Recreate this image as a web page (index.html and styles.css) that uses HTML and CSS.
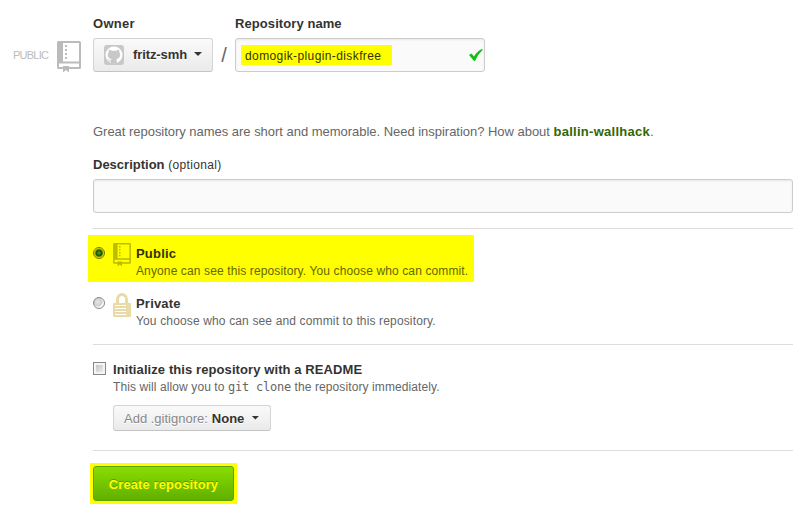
FILE: index.html
```html
<!DOCTYPE html>
<html lang="en">
<head>
<meta charset="utf-8">
<title>Create a new repository</title>
<link rel="stylesheet" href="styles.css">
</head>
<body>
<svg class="defs" aria-hidden="true">
  <symbol id="repo" viewBox="0 0 24 31">
    <path fill-rule="evenodd" d="M1.500 0h21Q24 0 24 1.500V26.500Q24 28 22.500 28H12v3.500l-3-2.500-3 2.500V28H1.500Q0 28 0 26.500v-25Q0 0 1.500 0zM6 2V20.500h16V2zM2 22.500v3.500h4v-1h6v1h10v-3.500z"/>
    <path d="M8 4h2v2H8zm0 4h2v2H8zm0 4h2v2H8zm0 4h2v2H8z"/>
  </symbol>
</svg>
<form class="page">
  <aside class="visibility"><span class="visibility-text">PUBLIC</span><svg class="repo-large"><use href="#repo"/></svg></aside>
  <main class="content">
    <div class="name-row">
      <div class="field owner">
        <div class="label"><span class="owner-label">Owner</span></div>
        <button type="button" class="select owner-select">
          <svg class="avatar" viewBox="0 0 20 20"><rect width="20" height="20" rx="3" fill="#c8c8c8"/><circle cx="10" cy="10" r="8.500" fill="#fff"/><path fill="#c8c8c8" d="M5 4.500l3 1.200h4l3-1.200.4 2.700c1.600 2.500.8 6-2.900 6.800l.5 4.800H7v-2.300c-2 .2-2.500-2-3.500-2.500 1.800-.3 2 1.600 3.600 1.300l.4-1.300c-3.700-.8-4.500-4.300-2.900-6.800z"/></svg>
          <strong class="owner-name">fritz-smh</strong><i class="caret"></i>
        </button>
      </div>
      <span class="slash">/</span>
      <div class="field repo">
        <div class="label"><span class="repo-label">Repository name</span></div>
        <div class="input repo-input"><span class="marked">domogik-plugin-diskfree</span><svg class="check" viewBox="0 0 14 12"><path fill="#14be14" d="M0 6l2.500-1.500L5 7.500Q8 2 13 0l.8.800Q9 5 6 12H5z"/></svg></div>
      </div>
    </div>
    <p class="hint"><span class="hint-copy">Great repository names are short and memorable. Need inspiration? How about </span><strong>ballin-wallhack</strong>.</p>
    <div class="label description-label"><span class="desc-word">Description</span> <span class="optional">(optional)</span></div>
    <div class="input"></div>
    <hr>
    <div class="option public">
      <span class="radio checked"></span>
      <svg class="repo-small"><use href="#repo"/></svg>
      <div class="copy"><strong class="public-title">Public</strong><span class="note public-note">Anyone can see this repository. You choose who can commit.</span></div>
    </div>
    <div class="option private">
      <span class="radio"></span>
      <svg class="lock" viewBox="0 0 18 24"><path fill="none" stroke="#e9dba5" stroke-width="3" d="M4.500 12V6.500a4.500 5 0 0 1 9 0V12"/><path fill="#e9dba5" fill-rule="evenodd" d="M1 10h16q1 0 1 1v12q0 1-1 1H1q-1 0-1-1V11q0-1 1-1zm1 2v1h11v-1zm0 3v1h11v-1zm0 3v1h11v-1zm0 3v1h11v-1z"/></svg>
      <div class="copy"><strong class="private-title">Private</strong><span class="note private-note">You choose who can see and commit to this repository.</span></div>
    </div>
    <hr>
    <div class="readme">
      <span class="checkbox"></span>
      <div class="copy">
        <strong class="readme-title">Initialize this repository with a README</strong>
        <span class="note readme-note">This will allow you to <code>git clone</code> the repository immediately.</span>
        <button type="button" class="select ignore-select"><span class="ignore-label">Add .gitignore:</span><strong class="ignore-value">None</strong><i class="caret"></i></button>
      </div>
    </div>
    <hr>
    <div class="submit-mark"><button type="button" class="submit"><span class="submit-text">Create repository</span></button></div>
  </main>
</form>
</body>
</html>
```
FILE: styles.css
```css
* { box-sizing: border-box; }
body { margin: 0; background: #fff; color: #333; font: 13px/18px "Liberation Sans", Arial, sans-serif; }
.defs { display: none; }
svg { display: block; flex: none; }
button { font: inherit; color: inherit; margin: 0; }
.page { display: flex; padding: 14px 14px 0 13px; white-space: nowrap; }
.visibility { display: flex; width: 80px; height: 31px; margin-top: 27px; flex: none; }
.visibility-text { width: 44px; font-size: 11px; line-height: 29px; color: #bbb; letter-spacing: -.75px; }
.repo-large { width: 24px; height: 31px; fill: #bbb; }
.content { width: 700px; flex: none; }
.name-row { display: flex; align-items: flex-end; height: 58px; }
.owner { width: 120px; }
.label { font-weight: bold; height: 18px; margin-bottom: 6px; }
.name-row .label { line-height: 20px; }
.owner-label { letter-spacing: .3px; }
.repo-label { letter-spacing: .08px; }
.select { display: flex; align-items: center; border: 1px solid #d4d4d4; border-bottom-color: #c4c4c4; border-radius: 3px; background: linear-gradient(#fafafa, #eaeaea); text-shadow: 0 1px 0 #fff; }
.owner-select { width: 120px; height: 34px; padding: 0 0 0 10px; }
.owner-name { letter-spacing: -.1px; }
.avatar { width: 20px; height: 20px; margin-right: 9px; }
.caret { width: 8px; height: 4px; background: #333; clip-path: polygon(0 0, 100% 0, 50% 100%); margin: -2px 0 0 7px; }
.slash { width: 22px; text-align: center; font-size: 20px; line-height: 34px; color: #666; }
.repo { width: 250px; }
.input { height: 34px; border: 1px solid #ccc; border-radius: 3px; background: #fafafa; box-shadow: inset 0 1px 2px rgba(0,0,0,.075); }
.repo-input { display: flex; align-items: center; justify-content: space-between; padding: 0 1px 0 5px; }
.marked { width: 151px; height: 20px; line-height: 22px; padding-left: 4px; background: #ff0; font-size: 12px; letter-spacing: .39px; color: #333300; }
.check { width: 14px; height: 12px; }
.hint { margin: 51px 0 0; height: 17px; color: #666; }
.hint-copy { letter-spacing: -.026px; }
.hint strong { color: #336600; letter-spacing: .27px; }
.description-label { margin: 16px 0 5px; }
.optional { font-size: 12px; font-weight: normal; letter-spacing: .35px; }
hr { height: 1px; border: 0; margin: 15px 0 0; background: #ddd; }
.option { display: flex; align-items: flex-start; }
.public { width: 386px; height: 47px; margin: 6px 0 0 -5px; padding: 8px 0 0 5px; background: #ff0; color: #333300; }
.private { height: 42px; margin-top: 3px; padding-top: 8px; }
.radio { width: 12px; height: 12px; margin: 4px 8px 0 0; border: 1px solid #888; border-radius: 50%; background: radial-gradient(circle at 40% 40%, #e8e8e8, #ccc 4px, #fafafa 5px); flex: none; }
.public .radio { border-color: #777700; background: radial-gradient(circle at 50% 50%, #4ca32a 0, #145500 3px, #aaa900 4px, #eeee00 5px); }
.repo-small { width: 18px; height: 23px; margin-right: 5px; fill: #bbbb00; }
.lock { width: 18px; height: 24px; margin: 0 5px 0 0; }
.copy strong, .note { display: block; }
.option .copy { padding-top: 2px; }
.public-title, .private-title { letter-spacing: .2px; }
.note { font-size: 12px; line-height: 17px; color: #666; }
.public .note { color: #666600; letter-spacing: .12px; }
.private-note { letter-spacing: .145px; }
.private + hr { margin-top: 17px; }
.readme { display: flex; margin-top: 16px; }
.readme-title { letter-spacing: .09px; }
.readme-note { letter-spacing: .1px; }
.checkbox { width: 13px; height: 13px; margin: 1px 7px 0 0; border: 1px solid #888; background: linear-gradient(135deg, #bbb, #f5f5f5); box-shadow: inset 0 0 0 2px #f4f4f4; }
code { font: 12px/17px "DejaVu Sans Mono", monospace; letter-spacing: -.22px; }
.ignore-select { width: 158px; height: 26px; padding: 1px 0 0 10px; margin-top: 9px; }
.ignore-label { color: #888; margin-right: 4px; }
.readme + hr { margin-top: 19px; }
.submit-mark { width: 147px; height: 41px; margin: 12px 0 0 -3px; padding: 3px; background: #ff0; }
.submit { display: block; width: 141px; height: 35px; padding: 2px 0 0; text-align: center; border: 1px solid #5da400; border-radius: 3px; background: linear-gradient(#8add00, #60b000); color: #ff0; font-weight: bold; letter-spacing: .1px; text-shadow: 0 -1px 0 #559a00; }
```
